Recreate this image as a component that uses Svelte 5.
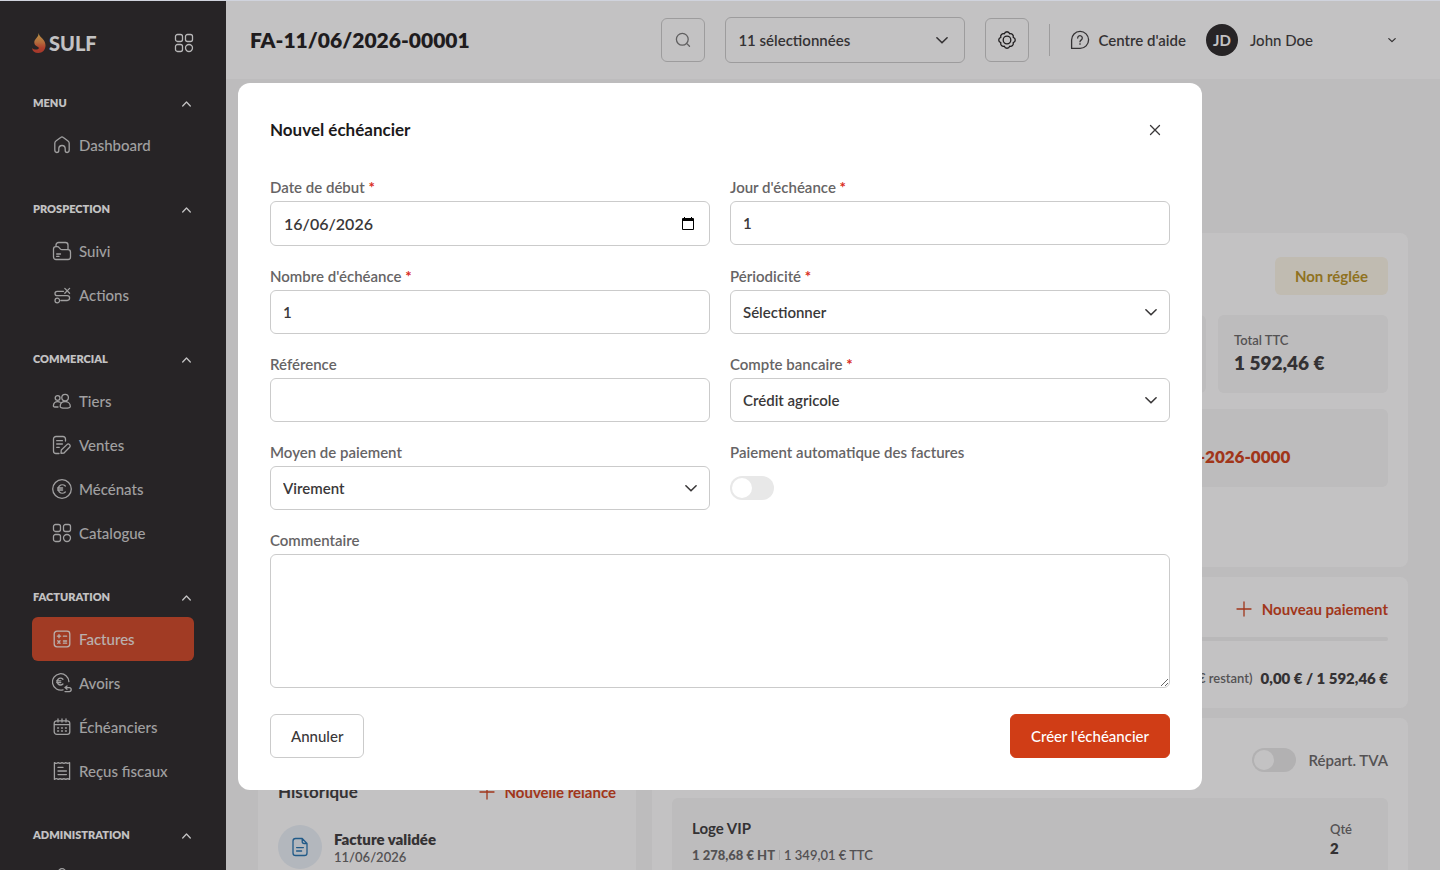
<script lang="ts">
	interface NavItem {
		label: string;
		icon: string;
		active?: boolean;
	}

	interface NavSection {
		title: string;
		items: NavItem[];
	}

	const icons: Record<string, string> = {
		grid: 'M3.5 1.5h3a2 2 0 0 1 2 2v3a2 2 0 0 1-2 2h-3a2 2 0 0 1-2-2v-3a2 2 0 0 1 2-2ZM13.5 1.5h3a2 2 0 0 1 2 2v3a2 2 0 0 1-2 2h-3a2 2 0 0 1-2-2v-3a2 2 0 0 1 2-2ZM3.5 11.5h3a2 2 0 0 1 2 2v3a2 2 0 0 1-2 2h-3a2 2 0 0 1-2-2v-3a2 2 0 0 1 2-2ZM15 11.5a3.5 3.5 0 1 1 0 7 3.5 3.5 0 0 1 0-7Z',
		home: 'M2.8 8.2c0-.9.4-1.7 1.1-2.2l4.8-3.6a2 2 0 0 1 2.6 0L16 6c.8.6 1.2 1.4 1.2 2.3v6.8c0 1.4-.9 2.4-2 2.4s-2-.9-2-2v-1.8c0-1.8-1.4-3.2-3.2-3.2s-3.2 1.4-3.2 3.2v1.8c0 1.1-.9 2-2 2s-2-1-2-2.4Z',
		folder:
			'M4 5.5V4a2.5 2.5 0 0 1 2.5-2.5h7A2.5 2.5 0 0 1 16 4v4.5M1.5 8a2.3 2.3 0 0 1 2.3-2.3h1.4c1 0 1.6.4 2.2 1.2l.8 1c.5.6 1 .8 1.8.8h6a2.5 2.5 0 0 1 2.5 2.5V16a2.5 2.5 0 0 1-2.5 2.5H4A2.5 2.5 0 0 1 1.5 16ZM4.7 13h3.8M4.7 15.4H7',
		route:
			'M11.5 6.3H5.2a2.2 2.2 0 0 0 0 4.4h10a2.4 2.4 0 0 1 0 4.8H9M7.6 15.5a2.3 2.3 0 1 1-4.6 0 2.3 2.3 0 0 1 4.6 0ZM12.8 3.4l4.8 4.8M17.6 3.4l-4.8 4.8',
		people:
			'M16.4 6.6a3.3 3.3 0 1 1-6.6 0 3.3 3.3 0 0 1 6.6 0ZM8.2 15.4c0-2.8 2-4.7 4.9-4.7s5.2 1.9 5.2 4.7c0 1.4-1.4 1.8-5.1 1.8s-5-.4-5-1.8ZM8 7a2.4 2.4 0 1 1-4.8 0A2.4 2.4 0 0 1 8 7ZM6 16H2.8c-1 0-1.5-.5-1.4-1.4.2-2.4 1.7-4 4.3-4 1 0 1.7.2 2.4.6',
		note: 'M13.5 6V4A2.5 2.5 0 0 0 11 1.5H4A2.5 2.5 0 0 0 1.5 4v12A2.5 2.5 0 0 0 4 18.5h3M4.7 5.7h5.7M4.7 9h5.7M4.7 12.3h2.6M9 18.3l.3-3.3 5.6-5.4a1.9 1.9 0 0 1 2.7 2.7L12 18Z',
		euro: 'M19.3 10a9.3 9.3 0 1 1-18.6 0 9.3 9.3 0 0 1 18.6 0ZM13.3 7a4.2 4.2 0 1 0 0 6M5.6 9h5M5.6 11h5',
		calc: 'M5 2.2h10A2.8 2.8 0 0 1 17.8 5v10a2.8 2.8 0 0 1-2.8 2.8H5A2.8 2.8 0 0 1 2.2 15V5A2.8 2.8 0 0 1 5 2.2ZM5.4 7.2h3.2M7 5.6v3.2M11.4 7.2h3.2M5.8 11.8l2.2 2.4M8 11.8l-2.2 2.4M11.4 12h3.2M11.4 14.2h3.2',
		refund:
			'M11 16.8A8.2 8.2 0 1 1 16.9 8.6M10.9 6.2a3.4 3.4 0 1 0 0 4.8M4.6 7.8h4.2M4.6 9.6h4.2M15 13l-2 1.6 2 1.6M13.2 14.6h4a2 2 0 0 1 0 4H13',
		calendar:
			'M4.8 3.8h10.4a2.6 2.6 0 0 1 2.6 2.6v8.4a2.6 2.6 0 0 1-2.6 2.6H4.8a2.6 2.6 0 0 1-2.6-2.6V6.4a2.6 2.6 0 0 1 2.6-2.6ZM2.2 7.6h15.6M6 2v3M10 2v3M14 2v3M5.6 11h1M9.5 11h1M13.4 11h1M5.6 14h1M9.5 14h1M13.4 14h1',
		receipt:
			'M2.4 1.6c1.4 1 2.5 1 3.8 0 1.4 1 2.4 1 3.8 0 1.4 1 2.4 1 3.8 0 1.4 1 2.4 1 3.8 0v16.8c-1.4-1-2.4-1-3.8 0-1.4-1-2.4-1-3.8 0-1.4-1-2.4-1-3.8 0-1.3-1-2.4-1-3.8 0ZM6 6.4h5M6 10h8.4M6 13.6h8.4',
		user: 'M13.5 5.2a3.5 3.5 0 1 1-7 0 3.5 3.5 0 0 1 7 0ZM3 17c0-3.4 3-5.6 7-5.6s7 2.2 7 5.6',
		search: 'M15.2 9.3a5.9 5.9 0 1 1-11.8 0 5.9 5.9 0 0 1 11.8 0ZM13.9 13.6l2.6 2.6',
		gear: 'M7.3 3.8a2.8 2.8 0 0 1 5.4 0 2.8 2.8 0 0 1 3.5 3.5 2.8 2.8 0 0 1 0 5.4 2.8 2.8 0 0 1-3.5 3.5 2.8 2.8 0 0 1-5.4 0 2.8 2.8 0 0 1-3.5-3.5 2.8 2.8 0 0 1 0-5.4 2.8 2.8 0 0 1 3.5-3.5ZM13.8 10a3.8 3.8 0 1 1-7.6 0 3.8 3.8 0 0 1 7.6 0Z',
		help: 'M1.6 18.4V10a8.5 8.5 0 1 1 8.5 8.4ZM7.7 8a2.3 2.3 0 1 1 3.6 1.9c-.9.6-1.3 1-1.3 1.9M10 13.7v.6',
		file: 'M12.2 1.5H5.6A2.6 2.6 0 0 0 3 4.1v11.8a2.6 2.6 0 0 0 2.6 2.6h8.8a2.6 2.6 0 0 0 2.6-2.6V6.5ZM12.2 1.5v3a2 2 0 0 0 2 2H17M6.6 10.6h6.8M6.6 14h5',
		plus: 'M10 3v14M3 10h14',
		close: 'M5.5 5.5l9 9M14.5 5.5l-9 9',
		up: 'M8.7 13l3.8-4 3.8 4',
		down: 'M4.9 7.8l5.1 5 5.1-5',
		downSmall: 'M6.8 8.6l3.2 3 3.2-3'
	};

	const sections: NavSection[] = [
		{ title: 'MENU', items: [{ label: 'Dashboard', icon: 'home' }] },
		{
			title: 'PROSPECTION',
			items: [
				{ label: 'Suivi', icon: 'folder' },
				{ label: 'Actions', icon: 'route' }
			]
		},
		{
			title: 'COMMERCIAL',
			items: [
				{ label: 'Tiers', icon: 'people' },
				{ label: 'Ventes', icon: 'note' },
				{ label: 'Mécénats', icon: 'euro' },
				{ label: 'Catalogue', icon: 'grid' }
			]
		},
		{
			title: 'FACTURATION',
			items: [
				{ label: 'Factures', icon: 'calc', active: true },
				{ label: 'Avoirs', icon: 'refund' },
				{ label: 'Échéanciers', icon: 'calendar' },
				{ label: 'Reçus fiscaux', icon: 'receipt' }
			]
		},
		{ title: 'ADMINISTRATION', items: [{ label: '', icon: 'user' }] }
	];

	let startDate = $state('16/06/2026');
	let dueDay = $state('1');
	let count = $state('1');
	let reference = $state('');
	let comment = $state('');
	let autoPay = $state(false);
	let splitVat = $state(false);
</script>

{#snippet icon(name: string)}
	<svg class="icon" viewBox="0 0 20 20" aria-hidden="true"><path d={icons[name]} /></svg>
{/snippet}

{#snippet label(id: string, text: string, required: boolean)}
	<label for={id}>{text}{#if required}&nbsp;<span class="required">*</span>{/if}</label>
{/snippet}

{#snippet select(id: string, value: string)}
	<div class="select">
		<select {id}>
			<option>{value}</option>
		</select>
		{@render icon('down')}
	</div>
{/snippet}

<div class="app">
	<aside class="sidebar">
		<div class="brand">
			<a class="logo" href="/">
				<svg viewBox="0 0 14 20" aria-hidden="true">
					<defs>
						<linearGradient id="flame" x1="0" y1="0" x2="0" y2="1">
							<stop offset="0" stop-color="#f3c055" />
							<stop offset="0.45" stop-color="#ea8a45" />
							<stop offset="0.75" stop-color="#e0492f" />
							<stop offset="1" stop-color="#d6402c" />
						</linearGradient>
					</defs>
					<path
						fill="url(#flame)"
						d="M6.5 0c.6 3 2.2 3.6 4.300 6C12.500 8 13.500 9.800 13.500 12.500c0 4.500-3 7.500-7.200 7.500C2.800 20 .4 18.400 0 15c1.600 1.500 4 2 5.800 1.200 1.500-.7 1.300-1.900-.2-2.500C3.200 12.800 2 11 2.300 8.800 2.700 5.800 6.900 4.200 6.500 0Z"
					/>
				</svg>
				<span>SULF</span>
			</a>
			<button class="bare" aria-label="Applications">{@render icon('grid')}</button>
		</div>

		<nav>
			{#each sections as section}
				<section>
					<button class="section-title">
						{section.title}
						{@render icon('up')}
					</button>
					{#each section.items as item}
						<a class="nav-item" class:active={item.active} href="/{item.icon}">
							{@render icon(item.icon)}
							{item.label}
						</a>
					{/each}
				</section>
			{/each}
		</nav>
	</aside>

	<main>
		<header class="topbar">
			<h1>FA-11/06/2026-00001</h1>
			<div class="tools">
				<button class="square muted" aria-label="Rechercher">{@render icon('search')}</button>
				<div class="select filter">
					<select aria-label="Sélection">
						<option>11 sélectionnées</option>
					</select>
					{@render icon('down')}
				</div>
				<button class="square" aria-label="Paramètres">{@render icon('gear')}</button>
				<a class="help" href="/aide">{@render icon('help')}Centre d'aide</a>
				<button class="user">
					<span class="avatar">JD</span>
					<span class="user-name">John Doe</span>
					{@render icon('downSmall')}
				</button>
			</div>
		</header>

		<div class="content">
			<div class="column">
				<section class="card client"></section>
				<section class="card history">
					<div class="card-head">
						<h2>Historique</h2>
						<button class="link">{@render icon('plus')}Nouvelle relance</button>
					</div>
					<div class="event">
						<span class="event-icon">{@render icon('file')}</span>
						<div>
							<strong>Facture validée</strong>
							<p>11/06/2026</p>
						</div>
					</div>
				</section>
			</div>

			<div class="column">
				<section class="card summary">
					<span class="badge">Non réglée</span>
					<div class="tiles">
						<div class="tile"></div>
						<div class="tile"></div>
						<div class="tile"></div>
						<div class="tile">
							<span>Total TTC</span>
							<strong>1 592,46 €</strong>
						</div>
						<div class="tile wide"></div>
						<div class="tile wide">
							<span>Vente</span>
							<a href="/ventes">Convention LOGES-2026-0000</a>
						</div>
					</div>
				</section>

				<section class="card payments">
					<button class="link">{@render icon('plus')}Nouveau paiement</button>
					<div class="progress"></div>
					<p class="balance">
						<span>(1 592,46 € restant)</span>
						<strong>0,00 € / 1 592,46 €</strong>
					</p>
				</section>

				<section class="card lines">
					<div class="vat">
						<input class="toggle" type="checkbox" id="split-vat" bind:checked={splitVat} />
						<label for="split-vat">Répart. TVA</label>
					</div>
					<div class="line">
						<div>
							<h3>Loge VIP</h3>
							<p class="price"><strong>1 278,68 € HT</strong><i></i>1 349,01 € TTC</p>
						</div>
						<div class="quantity">
							<span>Qté</span>
							<strong>2</strong>
						</div>
					</div>
				</section>
			</div>
		</div>
	</main>
</div>

<div class="backdrop">
	<div class="modal" role="dialog" aria-modal="true" aria-labelledby="modal-title">
		<div class="modal-head">
			<h2 id="modal-title">Nouvel échéancier</h2>
			<button class="close" aria-label="Fermer">{@render icon('close')}</button>
		</div>

		<form>
			<div class="field">
				{@render label('start-date', 'Date de début', true)}
				<div class="date">
					<input id="start-date" type="text" bind:value={startDate} />
					<button type="button" aria-label="Ouvrir le calendrier">
						<svg viewBox="0 0 14 14" aria-hidden="true">
							<path
								fill-rule="evenodd"
								d="M3 0h1v1h6V0h1v1h1a1 1 0 0 1 1 1v10a1 1 0 0 1-1 1H2a1 1 0 0 1-1-1V2a1 1 0 0 1 1-1h1ZM2 4v8h10V4Z"
							/>
						</svg>
					</button>
				</div>
			</div>
			<div class="field">
				{@render label('due-day', "Jour d'échéance", true)}
				<input id="due-day" type="text" bind:value={dueDay} />
			</div>
			<div class="field">
				{@render label('count', "Nombre d'échéance", true)}
				<input id="count" type="text" bind:value={count} />
			</div>
			<div class="field">
				{@render label('period', 'Périodicité', true)}
				{@render select('period', 'Sélectionner')}
			</div>
			<div class="field">
				{@render label('reference', 'Référence', false)}
				<input id="reference" type="text" bind:value={reference} />
			</div>
			<div class="field">
				{@render label('account', 'Compte bancaire', true)}
				{@render select('account', 'Crédit agricole')}
			</div>
			<div class="field">
				{@render label('method', 'Moyen de paiement', false)}
				{@render select('method', 'Virement')}
			</div>
			<div class="field">
				{@render label('auto-pay', 'Paiement automatique des factures', false)}
				<div class="toggle-row">
					<input class="toggle" type="checkbox" id="auto-pay" bind:checked={autoPay} />
				</div>
			</div>
			<div class="field full">
				{@render label('comment', 'Commentaire', false)}
				<textarea id="comment" bind:value={comment}></textarea>
			</div>
			<div class="actions">
				<button type="button" class="btn">Annuler</button>
				<button type="submit" class="btn primary">Créer l'échéancier</button>
			</div>
		</form>
	</div>
</div>

<style>
	:global(body) {
		overflow: hidden;
		background: #d0d3dd;
		color: #3a3839;
		font-family: Lato, 'Liberation Sans', sans-serif;
		font-size: 15px;
		line-height: 20px;
	}

	.app,
	.backdrop {
		--accent: #d03d16;
		--line: #cbcbcb;
		--ink: #3a3839;
		--muted: #666465;
	}

	h1,
	h2,
	h3,
	p {
		margin: 0;
	}

	button,
	input,
	select,
	textarea {
		box-sizing: border-box;
		color: inherit;
		font: inherit;
	}

	button {
		padding: 0;
		border: 0;
		background: none;
		cursor: pointer;
	}

	a {
		color: inherit;
		text-decoration: none;
	}

	.icon {
		width: 20px;
		height: 20px;
		flex: none;
		display: block;
		fill: none;
		stroke: currentColor;
		stroke-width: 1.3;
		stroke-linecap: round;
		stroke-linejoin: round;
	}

	.app {
		height: calc(100vh - 1px);
		margin-top: 1px;
		display: flex;
		background: #f7f7f7;
		overflow: hidden;
	}

	.sidebar {
		width: 226px;
		flex: none;
		box-sizing: border-box;
		padding: 0 32px;
		background: #272526;
		color: #fff;
	}

	.brand {
		height: 82px;
		box-sizing: border-box;
		display: flex;
		align-items: center;
		justify-content: space-between;
		padding-top: 2px;
	}

	.logo {
		display: flex;
		align-items: center;
		gap: 3px;
		font-size: 20px;
		font-weight: 900;
	}

	.logo svg {
		width: 14px;
		height: 20px;
	}

	.bare {
		color: #f0f0f0;
	}

	.sidebar section {
		margin-bottom: 22px;
	}

	.section-title {
		width: 100%;
		height: 40px;
		display: flex;
		align-items: center;
		justify-content: space-between;
		padding-left: 1px;
		font-size: 11px;
		font-weight: 800;
	}

	.nav-item {
		height: 44px;
		display: flex;
		align-items: center;
		gap: 7px;
		padding-left: 20px;
		border-radius: 6px;
		color: #d0d0d0;
		font-weight: 500;
	}

	.nav-item.active {
		background: #d04523;
		color: #f3e6e2;
	}

	main {
		flex: 1;
		min-width: 0;
	}

	.topbar {
		height: 78px;
		box-sizing: border-box;
		display: flex;
		align-items: center;
		justify-content: space-between;
		padding: 0 38px 0 24px;
		background: #fff;
	}

	h1 {
		color: #1c1a1b;
		font-size: 21px;
		font-weight: 800;
		line-height: 28px;
	}

	.tools {
		display: flex;
		align-items: center;
		gap: 20px;
	}

	.square {
		width: 44px;
		height: 44px;
		display: grid;
		place-items: center;
		border: 1px solid var(--line);
		border-radius: 6px;
		color: #1c1a1b;
	}

	.square.muted {
		color: #777;
	}

	.select {
		display: grid;
		align-items: center;
	}

	.select > :global(*) {
		grid-area: 1 / 1;
	}

	.select .icon {
		justify-self: end;
		margin-right: 9px;
		stroke-width: 1.6;
		pointer-events: none;
	}

	.filter {
		width: 240px;
	}

	.filter .icon {
		margin-right: 13px;
	}

	.help {
		height: 32px;
		display: flex;
		align-items: center;
		gap: 8px;
		padding-left: 20px;
		border-left: 1px solid var(--line);
		font-weight: 600;
	}

	.user {
		display: flex;
		align-items: center;
		gap: 12px;
		font-weight: 500;
	}

	.user-name {
		width: 120px;
		text-align: left;
	}

	.avatar {
		width: 32px;
		height: 32px;
		border-radius: 50%;
		background: #272526;
		color: #fff;
		font-weight: 700;
		line-height: 32px;
	}

	.content {
		display: grid;
		grid-template-columns: 1fr 2fr;
		gap: 16px;
		padding: 154px 32px 0;
	}

	.column {
		display: flex;
		flex-direction: column;
		gap: 10px;
	}

	.card {
		padding: 20px;
		border-radius: 8px;
		background: #fff;
	}

	.client {
		min-height: 478px;
	}

	.card-head {
		display: flex;
		align-items: center;
		justify-content: space-between;
		margin-bottom: 21px;
	}

	.card-head h2 {
		font-size: 17px;
		font-weight: 700;
	}

	.history {
		padding-top: 19px;
	}

	.link {
		display: flex;
		align-items: center;
		gap: 8px;
		color: var(--accent);
		font-weight: 700;
		line-height: 24px;
	}

	.event {
		display: flex;
		align-items: center;
		gap: 12px;
	}

	.event strong {
		font-weight: 800;
	}

	.event p {
		color: var(--muted);
		font-size: 13px;
		font-weight: 600;
		line-height: 16px;
	}

	.event-icon {
		width: 44px;
		height: 44px;
		display: grid;
		place-items: center;
		border-radius: 50%;
		background: #e9f0f7;
		color: #1f6fae;
	}

	.summary {
		min-height: 290px;
		display: flex;
		flex-direction: column;
		gap: 20px;
		padding: 24px 20px 20px;
	}

	.badge {
		align-self: flex-end;
		padding: 9px 20px;
		border-radius: 6px;
		background: #fbf5e6;
		color: #b8901c;
		font-weight: 700;
	}

	.tiles {
		display: grid;
		grid-template-columns: repeat(4, 1fr);
		gap: 16px 12px;
	}

	.tile {
		height: 78px;
		box-sizing: border-box;
		display: flex;
		flex-direction: column;
		padding: 16px;
		border-radius: 6px;
		background: #f7f7f7;
	}

	.tile.wide {
		grid-column: span 2;
	}

	.tile span {
		color: var(--muted);
		font-size: 13px;
		font-weight: 600;
		line-height: 18px;
	}

	.tile strong {
		font-size: 19px;
		font-weight: 800;
		line-height: 28px;
	}

	.tile a {
		color: var(--accent);
		font-size: 17px;
		font-weight: 800;
		line-height: 28px;
	}

	.payments {
		display: flex;
		flex-direction: column;
		padding-bottom: 18px;
	}

	.payments .link {
		align-self: flex-end;
	}

	.progress {
		height: 4px;
		margin: 16px 0 25px;
		border-radius: 2px;
		background: #f1f1f1;
	}

	.balance {
		display: flex;
		align-items: center;
		justify-content: flex-end;
		gap: 8px;
		line-height: 24px;
	}

	.balance span {
		color: var(--muted);
		font-size: 13px;
		font-weight: 600;
	}

	.balance strong {
		font-weight: 800;
	}

	.vat {
		display: flex;
		align-items: center;
		justify-content: flex-end;
		gap: 12px;
		padding: 10px 0 26px;
	}

	.line {
		display: flex;
		justify-content: space-between;
		padding: 20px 36px 20px 20px;
		border-radius: 6px;
		background: #f7f7f7;
	}

	.line h3 {
		margin-bottom: 8px;
		font-size: 15px;
		font-weight: 700;
	}

	.price {
		display: flex;
		align-items: center;
		color: var(--muted);
		font-size: 13px;
		font-weight: 600;
		line-height: 18px;
	}

	.price i {
		width: 1px;
		height: 10px;
		margin: 0 4px;
		background: #d8d8d8;
	}

	.quantity {
		display: flex;
		flex-direction: column;
		padding-top: 2px;
	}

	.quantity span {
		color: var(--muted);
		font-size: 13px;
		font-weight: 600;
		line-height: 18px;
	}

	.quantity strong {
		font-weight: 800;
	}

	.backdrop {
		position: fixed;
		inset: 1px 0 0;
		display: flex;
		align-items: center;
		justify-content: center;
		padding: 2px 24px 0;
		background: rgba(39, 37, 38, 0.28);
	}

	.modal {
		width: 100%;
		max-width: 964px;
		box-sizing: border-box;
		padding: 32px;
		border-radius: 12px;
		background: #fff;
	}

	.modal-head {
		display: flex;
		align-items: center;
		justify-content: space-between;
		margin-bottom: 32px;
	}

	.modal-head h2 {
		color: #1c1a1b;
		font-size: 17px;
		font-weight: 700;
	}

	.close {
		width: 30px;
		height: 30px;
		display: grid;
		place-items: center;
	}

	form {
		display: grid;
		grid-template-columns: 1fr 1fr;
		gap: 20px;
	}

	.field {
		display: flex;
		flex-direction: column;
		gap: 4px;
	}

	.full,
	.actions {
		grid-column: 1 / -1;
	}

	label {
		color: var(--muted);
		font-weight: 600;
	}

	.required {
		color: #d92b20;
		font-weight: 700;
	}

	.field > input,
	.date,
	select,
	textarea {
		width: 100%;
		height: 44px;
		padding: 0 12px;
		border: 1px solid var(--line);
		border-radius: 6px;
		background: #fff;
		color: var(--ink);
		font-weight: 600;
		outline: none;
	}

	select {
		appearance: none;
	}

	.filter select {
		height: 46px;
	}

	.date {
		height: 45px;
		box-sizing: border-box;
		display: flex;
		align-items: center;
		padding: 0 14px 0 13px;
	}

	.date input {
		flex: 1;
		min-width: 0;
		padding: 0;
		border: 0;
		font-size: 16px;
		font-weight: 600;
		outline: none;
	}

	.date svg {
		width: 14px;
		height: 14px;
		display: block;
		fill: #000;
	}

	textarea {
		height: 134px;
		padding: 12px;
		resize: vertical;
	}

	.toggle-row {
		height: 44px;
		display: flex;
		align-items: center;
	}

	.toggle {
		appearance: none;
		width: 44px;
		height: 24px;
		margin: 0;
		padding: 2px;
		border-radius: 12px;
		background: #e8e8e8;
		cursor: pointer;
	}

	.toggle::before {
		content: '';
		width: 20px;
		height: 20px;
		display: block;
		border-radius: 50%;
		background: #fff;
	}

	.toggle:checked {
		padding-left: 22px;
		background: var(--accent);
	}

	.actions {
		display: flex;
		justify-content: space-between;
		padding-top: 6px;
	}

	.btn {
		height: 44px;
		padding: 0 20px;
		border: 1px solid var(--line);
		border-radius: 6px;
		font-weight: 500;
	}

	.btn.primary {
		border-color: var(--accent);
		background: var(--accent);
		color: #fff;
	}
</style>
